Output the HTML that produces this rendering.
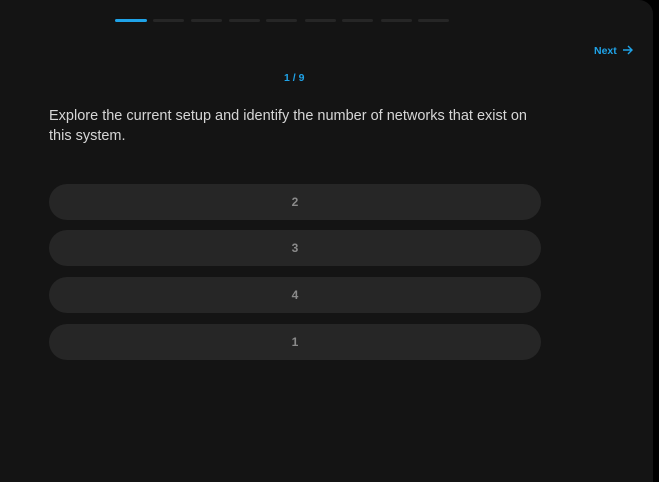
<!DOCTYPE html><html><head><style>
body{margin:0;width:659px;height:482px;background:#000;overflow:hidden;font-family:"Liberation Sans",sans-serif}
.p{position:absolute;left:0;top:0;width:653px;height:482px;background:#141414;border-top-right-radius:14px}
.bar{position:absolute;top:19px;height:3px;border-radius:2px;background:#262626;width:31px}
.opt{position:absolute;left:49px;width:492px;height:36px;border-radius:18px;background:#262626;color:#8a8a8a;font-size:12px;font-weight:bold;text-align:center;line-height:36px}
</style></head><body><div class="p">
<div class="bar" style="left:115px;width:32px;background:#1fa3e8"></div>
<div class="bar" style="left:153px"></div><div class="bar" style="left:191px"></div><div class="bar" style="left:229px"></div><div class="bar" style="left:266px"></div><div class="bar" style="left:305px"></div><div class="bar" style="left:342px"></div><div class="bar" style="left:381px"></div><div class="bar" style="left:418px"></div>
<div style="position:absolute;left:594px;top:45px;color:#1fa3e8;font-size:10.5px;font-weight:bold">Next <svg width="11" height="10" viewBox="0 0 11 10" style="vertical-align:-1px;margin-left:2px"><path d="M1 5H10M6 1L10 5L6 9" stroke="#1fa3e8" stroke-width="1.4" fill="none"/></svg></div>
<div style="position:absolute;left:284px;top:72px;color:#1fa3e8;font-size:10.5px;font-weight:bold">1 / 9</div>
<div style="position:absolute;left:49px;top:106px;width:490px;color:#d6d6d6;font-size:14.5px;line-height:20px">Explore the current setup and identify the number of networks that exist on this system.</div>
<div class="opt" style="top:184px">2</div><div class="opt" style="top:230px">3</div><div class="opt" style="top:277px">4</div><div class="opt" style="top:324px">1</div>
</div></body></html>
